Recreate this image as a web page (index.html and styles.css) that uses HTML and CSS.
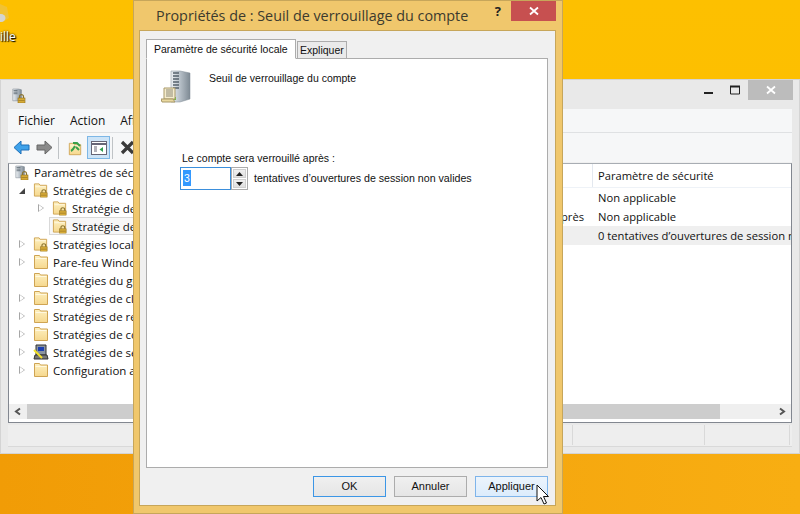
FILE: index.html
```html
<!DOCTYPE html>
<html lang="fr">
<head>
<meta charset="utf-8">
<title>Propriétés</title>
<link rel="stylesheet" href="styles.css">
</head>
<body>
<svg class="defs" width="0" height="0">
  <defs>
    <linearGradient id="fg" x1="0" y1="0" x2="0" y2="1"><stop offset="0" stop-color="#fdf0c0"/><stop offset="1" stop-color="#f6d88e"/></linearGradient>
    <linearGradient id="sg" x1="0" y1="0" x2="1" y2="0"><stop offset="0" stop-color="#eef1f4"/><stop offset=".45" stop-color="#b9c2ca"/><stop offset="1" stop-color="#7e8a94"/></linearGradient>
    <symbol id="folder" viewBox="0 0 16 16">
      <path d="M1.500 14.500V1.500h5l1 1.500h7v11.500z" fill="url(#fg)" stroke="#cfa453"/>
      <path d="M2.500 4.500h11" stroke="#fff8e0" fill="none"/>
    </symbol>
    <symbol id="lock" viewBox="0 0 9 9">
      <path d="M2.500 4V2.700a2 2 0 0 1 4 0V4" fill="none" stroke="#8a7430" stroke-width="1.200"/>
      <rect x="1" y="4" width="7" height="5" fill="#d7ab37" stroke="#8f6f1e" stroke-width=".6"/>
      <path d="M1.500 6.500h6" stroke="#8f6f1e" stroke-width=".6"/>
    </symbol>
    <symbol id="lockfolder" viewBox="0 0 17 16">
      <use href="#folder" width="16" height="16"/>
      <use href="#lock" x="7" y="7" width="9" height="9"/>
    </symbol>
    <symbol id="tower" viewBox="0 0 14 16">
      <path d="M1 1h7l4 1v13l-4 1H1z" fill="url(#sg)" stroke="#6f7a84" stroke-width=".6"/>
      <path d="M2 3h5M2 5h5M2 7h5" stroke="#56626c"/>
    </symbol>
    <symbol id="locktower" viewBox="0 0 15 16">
      <use href="#tower" width="11" height="15"/>
      <use href="#lock" x="5" y="7" width="9" height="9"/>
    </symbol>
  </defs>
</svg>

<div class="desktop">
  <svg class="bin" viewBox="0 0 16 22"><path d="M0 4 L7 7 L9 18 L3 22 H0z" fill="#e8c25c" opacity=".55"/><ellipse cx="1" cy="18" rx="4.500" ry="4" fill="#d4d4d0"/></svg>
  <span class="deskname">ille</span>

  <section class="mmc">
    <header class="mmc-title">
      <svg class="mmc-icon"><use href="#locktower"/></svg>
      <div class="caption-btns">
        <svg class="cap cap-min" viewBox="0 0 12 12"><path d="M1 9h9" stroke="#222" stroke-width="2"/></svg>
        <svg class="cap cap-max" viewBox="0 0 12 12"><path d="M1.500 2.500h9v7.500h-9z" fill="none" stroke="#222"/><path d="M1 2.500h10" stroke="#222" stroke-width="2"/></svg>
        <div class="closebtn grey"><svg viewBox="0 0 10 10" class="x"><path d="M1 1.500l8 7M9 1.500l-8 7" stroke="#fff" stroke-width="1.800"/></svg></div>
      </div>
    </header>
    <div class="mmc-body">
      <nav class="menu"><span>Fichier</span><span>Action</span><span>Affichage</span></nav>
      <div class="toolbar">
        <svg class="tool arrow" viewBox="0 0 17 15"><path d="M8 1L1 7.500 8 14v-4h8V5H8z" fill="#3fa2ea" stroke="#1d6fb8"/></svg>
        <svg class="tool arrow" viewBox="0 0 17 15"><path d="M9 1l7 6.500L9 14v-4H1V5h8z" fill="#8a8a8a" stroke="#666"/></svg>
        <i class="tsep"></i>
        <svg class="tool up" viewBox="0 0 16 16"><use href="#folder" y="2" width="16" height="14"/><path d="M4 11c2-1 3-3 4-5M6 3h4l3 3M9 7l3 3" stroke="#3aa04a" stroke-width="2" fill="none"/></svg>
        <div class="toolsel">
          <svg class="tool" viewBox="0 0 16 14"><rect x=".5" y=".5" width="15" height="13" fill="#fff" stroke="#667"/><path d="M1 3h14" stroke="#667" stroke-width="2"/><path d="M3 6h3M3 8h3M3 10h3" stroke="#667"/><path d="M12 6v5L8.500 8.500z" fill="#2f9e52"/></svg>
        </div>
        <i class="tsep"></i>
        <svg class="tool del" viewBox="0 0 15 15"><path d="M2 2l11 11M13 2L2 13" stroke="#3a3a3a" stroke-width="3.200"/></svg>
      </div>
      <div class="panes">
        <div class="tree-pane">
          <div class="tree">
            <div class="row root"><span class="lbl"><svg class="ico"><use href="#locktower"/></svg>Paramètres de sécurité</span></div>
            <div class="row l1"><i class="tw open"></i><span class="lbl"><svg class="ico"><use href="#lockfolder"/></svg>Stratégies de comptes</span></div>
            <div class="row l2"><i class="tw"></i><span class="lbl"><svg class="ico"><use href="#lockfolder"/></svg>Stratégie de mot de passe</span></div>
            <div class="row l2 sel"><i class="tw none"></i><span class="lbl"><svg class="ico"><use href="#lockfolder"/></svg>Stratégie de verrouillage</span></div>
            <div class="row l1"><i class="tw"></i><span class="lbl"><svg class="ico"><use href="#lockfolder"/></svg>Stratégies locales</span></div>
            <div class="row l1"><i class="tw"></i><span class="lbl"><svg class="ico"><use href="#folder"/></svg>Pare-feu Windows</span></div>
            <div class="row l1"><i class="tw none"></i><span class="lbl"><svg class="ico"><use href="#folder"/></svg>Stratégies du gestionnaire</span></div>
            <div class="row l1"><i class="tw"></i><span class="lbl"><svg class="ico"><use href="#folder"/></svg>Stratégies de clé publique</span></div>
            <div class="row l1"><i class="tw"></i><span class="lbl"><svg class="ico"><use href="#folder"/></svg>Stratégies de restriction</span></div>
            <div class="row l1"><i class="tw"></i><span class="lbl"><svg class="ico"><use href="#folder"/></svg>Stratégies de contrôle</span></div>
            <div class="row l1"><i class="tw"></i><span class="lbl"><svg class="ico" viewBox="0 0 16 16"><path d="M3 1h10v10H3z" fill="#8a94a0" stroke="#333"/><path d="M5 3h6v4H5z" fill="#1c3fb0"/><path d="M2 11h12l1 4H1z" fill="#777" stroke="#333"/><path d="M1 6l8 8" stroke="#f3e22a" stroke-width="2"/></svg>Stratégies de sécurité</span></div>
            <div class="row l1"><i class="tw"></i><span class="lbl"><svg class="ico"><use href="#folder"/></svg>Configuration avancée</span></div>
          </div>
          <div class="list">
            <div class="list-head"><span class="c-name"></span><span class="c-val">Paramètre de sécurité</span></div>
            <div class="list-row"><span class="c-name"></span><span class="c-val">Non applicable</span></div>
            <div class="list-row"><span class="c-name">après</span><span class="c-val">Non applicable</span></div>
            <div class="list-row hot"><span class="c-name"></span><span class="c-val">0 tentatives d’ouvertures de session non valides</span></div>
          </div>
        </div>
        <div class="hscroll">
          <svg class="chev" viewBox="0 0 8 8"><path d="M6 1L2 4l4 3" fill="none" stroke="#555" stroke-width="2"/></svg>
          <div class="thumb"></div>
          <svg class="chev" viewBox="0 0 8 8"><path d="M2 1l4 3-4 3" fill="none" stroke="#555" stroke-width="2"/></svg>
        </div>
      </div>
      <footer class="status"><i class="s1"></i><i class="s2"></i><i class="s3"></i></footer>
    </div>
  </section>

  <section class="dialog">
    <header class="dlg-title">
      <h1>Propriétés de : Seuil de verrouillage du compte</h1>
      <span class="help">?</span>
      <div class="closebtn red"><svg viewBox="0 0 10 10" class="x"><path d="M1 1.500l8 7M9 1.500l-8 7" stroke="#fff" stroke-width="1.800"/></svg></div>
    </header>
    <div class="dlg-client">
      <div class="tabs">
        <span class="tab active">Paramètre de sécurité locale</span>
        <span class="tab">Expliquer</span>
      </div>
      <div class="tabpanel">
        <div class="policy">
          <svg class="policy-icon" viewBox="0 0 30 33">
            <path d="M10 1h9l10 2v26l-10 3h-9z" fill="url(#sg)" stroke="#7e8a94" stroke-width=".5"/>
            <path d="M12 3h6M12 6h6M12 9h6M12 12h6M12 15h6M12 18h6" stroke="#56626c" stroke-width="1.500"/>
            <rect x="12" y="27" width="3" height="3" fill="#70c040"/>
            <path d="M3 18h11v11H3z" fill="#f4eccd" stroke="#a89868"/>
            <path d="M5 20h7M5 22h7M5 24h7M5 26h7" stroke="#8e8a78"/>
            <path d="M0 29h12l2 3H1z" fill="#ead9a0" stroke="#a89868"/>
          </svg>
          <span>Seuil de verrouillage du compte</span>
        </div>
        <div class="lockout">
          <label>Le compte sera verrouillé après :</label>
          <div class="lock-row">
            <div class="spin">
              <div class="field"><span class="selected">3</span></div>
              <div class="spin-btns">
                <div class="sb"><svg viewBox="0 0 7 4"><path d="M3.500 0L7 4H0z" fill="#222"/></svg></div>
                <div class="sb"><svg viewBox="0 0 7 4"><path d="M0 0h7L3.500 4z" fill="#222"/></svg></div>
              </div>
            </div>
            <span class="attempts">tentatives d’ouvertures de session non valides</span>
          </div>
        </div>
      </div>
      <div class="actions">
        <button class="btn default">OK</button>
        <button class="btn">Annuler</button>
        <button class="btn hover">Appliquer</button>
      </div>
    </div>
  </section>

  <svg class="cursor" viewBox="0 0 13 21"><path d="M1 1v16l4-3.500 3 6.500 2.500-1-3-6.500h5z" fill="#fff" stroke="#111" stroke-linejoin="round"/></svg>
</div>
</body>
</html>
```
FILE: styles.css
```css
* { box-sizing: border-box; }
html, body { margin: 0; height: 100%; }
body { overflow: hidden; font-family: "Open Sans", "Liberation Sans", sans-serif; color: #111; }
.defs { position: absolute; }
.desktop {
  position: relative; width: 800px; height: 514px; overflow: hidden;
  background:
    linear-gradient(180deg, #fdc000 0, #fdbf00 90px, rgba(253,191,0,0) 400px),
    linear-gradient(90deg, #f19c06 0, #f3a20c 300px, #f8ae12 800px);
}
.bin { position: absolute; left: 0; top: 0; width: 16px; height: 22px; }
.deskname { position: absolute; left: 0; top: 29px; font: 12px/15px "Open Sans", sans-serif; color: #fff; text-shadow: 0 0 2px #000, 1px 1px 1px #000; }

/* back window */
.mmc {
  position: absolute; left: 0; top: 79px; width: 800px; height: 375px;
  display: flex; flex-direction: column;
  background: #e9e9e9; border: 1px solid #d4d4d4;
}
.mmc-title { height: 29px; flex: none; display: flex; justify-content: space-between; padding: 0 6px 0 11px; }
.mmc-icon { width: 15px; height: 16px; margin-top: 7px; }
.caption-btns { display: flex; align-items: flex-start; }
.cap { width: 12px; height: 12px; margin-top: 4px; }
.cap-min { margin-right: 14px; }
.cap-max { margin-right: 7px; }
.closebtn { width: 45px; height: 20px; display: flex; align-items: center; justify-content: center; }
.grey { background: #bcbcbc; }
.red { background: #c75050; }
.x { width: 10px; height: 10px; }
.mmc-body { flex: 1; margin: 0 7px 6px; display: flex; flex-direction: column; }
.menu { height: 24px; flex: none; display: flex; gap: 15px; padding: 0 10px; align-items: center; font-size: 12px; background: #f6f7f8; border-bottom: 1px solid #dfe1e3; }
.toolbar { height: 30px; flex: none; display: flex; align-items: center; padding-left: 5px; background: #f6f7f8; border-bottom: 1px solid #f0f0f0; }
.tool { width: 16px; height: 14px; flex: none; }
.arrow { margin-right: 6px; width: 17px; height: 15px; }
.up { width: 16px; height: 16px; margin-left: 8px; overflow: visible; }
.tsep { width: 1px; height: 22px; background: #bfc3c6; flex: none; margin-left: -1px; }
.toolsel { width: 23px; height: 23px; margin-left: 4px; margin-right: 3px; background: #cde4f7; border: 1px solid #7db7e6; display: flex; align-items: center; justify-content: center; }
.del { margin-left: 7px; width: 15px; height: 15px; }
.panes { height: 260px; flex: none; background: #fff; border: 1px solid #828790; border-top-color: #a8adb3; display: flex; flex-direction: column; overflow: hidden; }
.tree-pane { flex: 1; display: flex; min-height: 0; }
.tree { width: 540px; flex: none; margin-top: -1px; }
.row { height: 18px; display: flex; align-items: center; white-space: nowrap; font-size: 11.500px; }
.root { padding-left: 6px; }
.l1 { padding-left: 10px; }
.l2 { padding-left: 29px; }
.tw { width: 14px; flex: none; height: 9px; position: relative; }
.tw::before { content: ""; position: absolute; left: 0; top: 0; border-left: 6px solid #a6a6a6; border-top: 4.500px solid transparent; border-bottom: 4.500px solid transparent; }
.tw::after { content: ""; position: absolute; left: 1px; top: 1.500px; border-left: 4px solid #fff; border-top: 3px solid transparent; border-bottom: 3px solid transparent; }
.tw.none::before, .tw.none::after { display: none; }
.tw.open::after { display: none; }
.tw.open::before { border: 0; border-bottom: 6px solid #444; border-left: 6px solid transparent; top: 2px; }
.lbl { display: flex; align-items: center; height: 18px; }
.ico { width: 16px; height: 16px; margin-right: 4px; flex: none; }
.root .ico { width: 15px; }
.sel .lbl { background: #f7f7f7; outline: 1px solid #d9d9d9; outline-offset: -1px; margin-left: -3px; padding-left: 3px; padding-right: 60px; }
.list { flex: 1; font-size: 11.200px; }
.list-head { height: 24px; display: flex; align-items: center; border-bottom: 1px solid #eef2f7; }
.list-head .c-val { align-self: stretch; display: flex; align-items: center; border-left: 1px solid #e3e8ef; padding-left: 5px; }
.list-row { height: 19px; display: flex; align-items: center; white-space: nowrap; overflow: hidden; }
.c-name { width: 43px; flex: none; text-align: right; padding-right: 8px; }
.c-val { padding-left: 6px; }
.hot { background: #efefef; }
.hscroll { height: 15px; flex: none; margin: 0 0 3px; display: flex; align-items: stretch; background: #efefef; }
.chev { width: 18px; height: 15px; flex: none; padding: 3px 5px; }
.thumb { width: 693px; background: #cdcdcd; margin-right: auto; }
.status { flex: 1; margin-top: 2px; position: relative; display: flex; border-bottom: 1px solid #d9d9d9; background: #eee; height: 22px; }
.status i { position: absolute; top: 0; bottom: 1px; width: 1px; background: #d9d9d9; }
.s1 { left: 564px; } .s2 { left: 696px; } .s3 { left: 781px; }

/* dialog */
.dialog {
  position: absolute; left: 133px; top: 0; width: 430px; height: 514px;
  background: #f0c76c; border: 1px solid #c7a65a; display: flex; flex-direction: column;
}
.dlg-title { height: 29px; flex: none; display: flex; align-items: flex-start; padding-right: 6px; }
.dlg-title h1 { margin: 0; padding: 5px 0 0 22px; font: 400 14.350px/20px "Open Sans", sans-serif; color: #3c3a2e; flex: 1; white-space: nowrap; }
.help { font: 700 13px/20px "Open Sans", sans-serif; color: #222; margin: 0 10px 0 0; }
.dlg-client { flex: 1; margin: 0 6px 7px 5px; background: #f0f0f0; border: 1px solid #c7a65a; padding: 0 7px 0 6px; display: flex; flex-direction: column; font: 10.500px/13px "Liberation Sans", sans-serif; }
.tabs { display: flex; align-items: flex-end; gap: 1px; height: 28px; flex: none; position: relative; z-index: 1; margin-bottom: -1px; }
.tab { height: 18px; padding: 0 2px; width: 50px; background: #eaeaea; border: 1px solid #acacac; display: flex; align-items: center; white-space: nowrap; }
.tab.active { height: 20px; width: 150px; padding: 0 7px; background: #fff; border-bottom-color: #fff; }
.tabpanel { flex: 1; background: #fff; border: 1px solid #acacac; padding: 11px 14px; display: flex; flex-direction: column; }
.policy { display: flex; height: 33px; gap: 18px; }
.policy-icon { width: 30px; height: 33px; flex: none; }
.policy span { margin-top: 2px; }
.lockout { margin: 49px 0 0 19px; }
.lockout label { display: block; padding-left: 2px; }
.lock-row { display: flex; align-items: center; gap: 6px; margin-top: 2px; }
.attempts { font-size: 10.650px; }
.spin { width: 68px; height: 23px; display: flex; }
.field { width: 51px; border: 1px solid #3b8fdc; background: #fff; padding: 2px; }
.selected { display: block; width: 8px; height: 16px; background: #3399ff; color: #fff; line-height: 16px; text-align: center; }
.spin-btns { flex: 1; border: 1px solid #acacac; display: flex; flex-direction: column; gap: 1px; padding: 1px; background: #fff; }
.sb { flex: 1; background: linear-gradient(#f0f0f0, #e0e0e0); border: 1px solid #d0d0d0; display: flex; align-items: center; justify-content: center; }
.sb svg { width: 7px; height: 4px; }
.actions { height: 37px; flex: none; display: flex; justify-content: flex-end; gap: 8px; padding-top: 8px; }
.btn { width: 73px; height: 21px; padding: 0; font: 11px/13px "Liberation Sans", sans-serif; color: #111; border: 1px solid #acacac; background: linear-gradient(#f0f0f0, #e5e5e5); }
.btn.default { border-color: #3c96e6; }
.btn.hover { border-color: #7eb4ea; background: linear-gradient(#ecf4fc, #dcecfc); }
.cursor { position: absolute; left: 536px; top: 484px; width: 13px; height: 21px; }
```
